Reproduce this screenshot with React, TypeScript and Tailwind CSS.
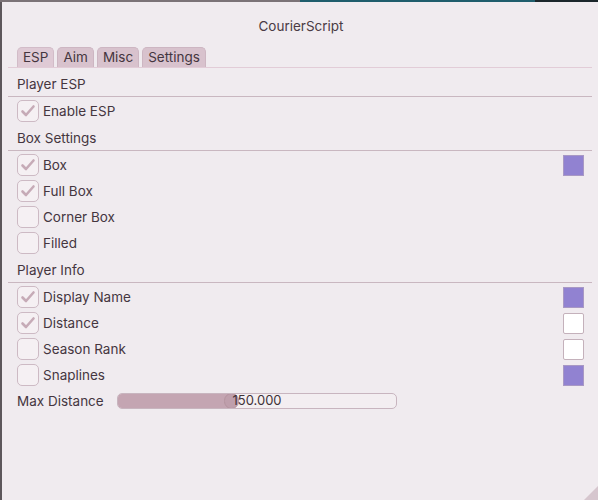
import React from "react";

type Row = { label: string; checked: boolean; swatch?: "purple" | "white" };

const sections: { title: string; rows: Row[] }[] = [
  { title: "Player ESP", rows: [{ label: "Enable ESP", checked: true }] },
  {
    title: "Box Settings",
    rows: [
      { label: "Box", checked: true, swatch: "purple" },
      { label: "Full Box", checked: true },
      { label: "Corner Box", checked: false },
      { label: "Filled", checked: false },
    ],
  },
  {
    title: "Player Info",
    rows: [
      { label: "Display Name", checked: true, swatch: "purple" },
      { label: "Distance", checked: true, swatch: "white" },
      { label: "Season Rank", checked: false, swatch: "white" },
      { label: "Snaplines", checked: false, swatch: "purple" },
    ],
  },
];

const tabs = ["ESP", "Aim", "Misc", "Settings"];

function Checkbox({ checked }: { checked: boolean }) {
  return (
    <div className="w-[22px] h-[22px] rounded-[5px] border border-[#cdbac4] bg-[#f5f0f3] flex items-center justify-center shrink-0">
      {checked && (
        <svg width="18" height="18" viewBox="0 0 18 18">
          <path d="M3.5 9.5 L7 13 L14.5 4.5" fill="none" stroke="#c6abb7" strokeWidth="2.6" strokeLinecap="round" strokeLinejoin="round" />
        </svg>
      )}
    </div>
  );
}

export default function App() {
  return (
    <div
      className="w-[598px] h-[500px] flex flex-col bg-[#6e676b] overflow-hidden text-[13.5px] text-[#45363f]"
      style={{ fontFamily: "Inter, 'Noto Sans', sans-serif" }}
    >
      <div className="h-[2px] flex shrink-0">
        <div className="w-[300px] bg-[#7b7377]" />
        <div className="w-[235px] bg-[#1f5d6c]" />
        <div className="flex-1 bg-[#1b262b]" />
      </div>
      <div className="flex flex-1">
        <div className="w-[2px] bg-[#5d575b]" />
        <div className="flex-1 bg-[#f0ebef] flex flex-col relative">
          <div className="h-[48px] flex items-center justify-center pl-[2px] pt-[1px] text-[13.5px] text-[#4a3b44]">
            CourierScript
          </div>
          <div className="flex gap-[3px] pl-[15px] h-[20px] -mt-[3px]">
            {tabs.map((t, i) => (
              <div
                key={t}
                className={`px-[5px] h-[20px] rounded-t-[5px] border border-b-0 flex items-center leading-none ${
                  i === 0 ? "bg-[#dfcad5] border-[#d2bcc8]" : "bg-[#d8c2cd] border-[#cdb6c2]"
                }`}
              >
                {t}
              </div>
            ))}
          </div>
          <div className="h-[1px] bg-[#e2ccd7] ml-[6px] mr-[6px]" />
          <div className="flex flex-col pt-[4px]">
            {sections.map((s) => (
              <div key={s.title} className="flex flex-col">
                <div className="h-[24px] flex items-center pl-[15px]">{s.title}</div>
                <div className="h-[1px] bg-[#c9b7c0] ml-[6px] mr-[6px]" />
                <div className="flex flex-col gap-[4px] pt-[3px] pb-[4px]">
                  {s.rows.map((r) => (
                    <div key={r.label} className="h-[22px] flex items-center pl-[15px] pr-[14px]">
                      <Checkbox checked={r.checked} />
                      <span className="ml-[4px] flex-1">{r.label}</span>
                      {r.swatch === "purple" && (
                        <div className="w-[21px] h-[21px] bg-[#9182d1] border border-[#a898c4]" />
                      )}
                      {r.swatch === "white" && (
                        <div className="w-[21px] h-[21px] bg-white border border-[#c4b1bb] rounded-[2px]" />
                      )}
                    </div>
                  ))}
                </div>
              </div>
            ))}
            <div className="h-[22px] flex items-center pl-[15px]">
              <span className="w-[100px]">Max Distance</span>
              <div className="relative w-[280px] h-[16px] rounded-[5px] border border-[#c8b5bf] bg-[#f3eef1] overflow-hidden">
                <div className="absolute left-0 top-0 bottom-0 w-[113px] bg-[#c4a5b2]" />
                <div className="absolute left-[106px] -top-[1px] w-[15px] h-[16px] rounded-full bg-[#bf9fac] border border-[#b4949f]" />
                <div className="absolute inset-0 flex items-center justify-center text-[13px] text-[#3f3238]">150.000</div>
              </div>
            </div>
          </div>
          <svg className="absolute right-0 bottom-0" width="14" height="14" viewBox="0 0 14 14">
            <path d="M14 0 L14 14 L0 14 Z" fill="#d6c6ce" />
          </svg>
        </div>
      </div>
    </div>
  );
}
